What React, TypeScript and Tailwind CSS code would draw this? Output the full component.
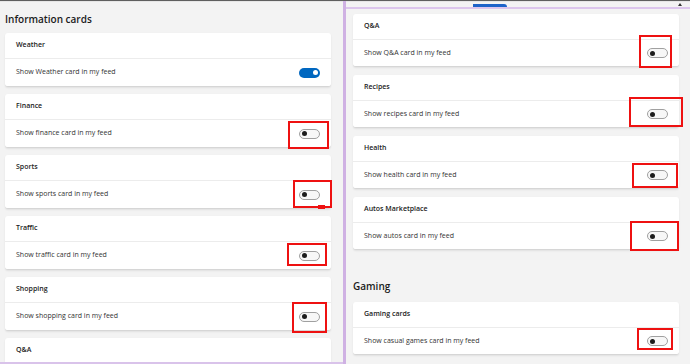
import React from 'react';

type Item = { title: string; label?: string; on?: boolean };

const leftCards: Item[] = [
  { title: 'Weather', label: 'Show Weather card in my feed', on: true },
  { title: 'Finance', label: 'Show finance card in my feed' },
  { title: 'Sports', label: 'Show sports card in my feed' },
  { title: 'Traffic', label: 'Show traffic card in my feed' },
  { title: 'Shopping', label: 'Show shopping card in my feed' },
  { title: 'Q&A' },
];

const rightCards: Item[] = [
  { title: 'Q&A', label: 'Show Q&A card in my feed' },
  { title: 'Recipes', label: 'Show recipes card in my feed' },
  { title: 'Health', label: 'Show health card in my feed' },
  { title: 'Autos Marketplace', label: 'Show autos card in my feed' },
];

// red annotation boxes drawn over the screenshot
const marks = [
  { x: 288, y: 121, w: 41, h: 28 },
  { x: 293, y: 180, w: 39, h: 28 },
  { x: 287, y: 243, w: 40, h: 23 },
  { x: 292, y: 302, w: 35, h: 31 },
  { x: 639, y: 35, w: 33, h: 33 },
  { x: 629, y: 97, w: 54, h: 30 },
  { x: 632, y: 163, w: 46, h: 25 },
  { x: 630, y: 221, w: 49, h: 30 },
  { x: 637, y: 328, w: 36, h: 22 },
];

const Toggle = ({ on }: { on?: boolean }) =>
  on ? (
    <div className="w-[21px] h-[10px] rounded-full bg-[#0067c0] flex items-center justify-end pr-[2px]">
      <div className="w-[5px] h-[5px] rounded-full bg-white" />
    </div>
  ) : (
    <div className="w-[21px] h-[10px] rounded-full border border-[#a0a0a0] bg-[#f7f7f7] flex items-center pl-[2px]">
      <div className="w-[5px] h-[5px] rounded-full bg-[#1c1c1c]" />
    </div>
  );

const Card = ({ item, tall }: { item: Item; tall?: boolean }) => (
  <div className="shrink-0 bg-white rounded-[3px] border-b border-[#d6d6d6] shadow-[0_1px_2px_rgba(0,0,0,0.08)]">
    <div className="h-[26px] px-[11px] flex items-center border-b border-[#ececec] text-[7px] font-semibold text-[#1b1b1b]">
      {item.title}
    </div>
    {item.label && (
      <div
        className={`${tall ? 'h-[27px]' : 'h-[26px]'} px-[11px] flex items-center justify-between text-[7px] text-[#333]`}
      >
        <span>{item.label}</span>
        <Toggle on={item.on} />
      </div>
    )}
  </div>
);

export default function App() {
  return (
    <div className="relative w-[690px] h-[364px] overflow-hidden bg-[#f3f3f3] font-['Open_Sans',sans-serif] flex flex-col">
      <div className="h-px bg-[#5f5f5f] shrink-0" />
      <div className="flex flex-1 min-h-0">
        {/* left window */}
        <div className="w-[343px] flex flex-col shrink-0">
          <div className="flex-1 min-h-0 overflow-hidden pl-[5px] pr-[12px] border-t border-[#e6e6e6]">
            <div className="h-[31px] flex items-center pt-[4px] text-[10px] font-semibold text-[#1b1b1b]">
              Information cards
            </div>
            <div className="flex flex-col gap-[7px]">
              {leftCards.map((c) => (
                <Card key={c.title} item={c} tall />
              ))}
            </div>
          </div>
          <div className="h-[2px] bg-[#d9c3ea] shrink-0" />
        </div>

        {/* divider */}
        <div className="w-[3px] bg-[#cfb1e3] shrink-0" />

        {/* right window */}
        <div className="flex-1 flex flex-col">
          <div className="h-[6px] flex items-end border-t border-[#e6e6e6] shrink-0">
            <div className="ml-[127px] w-[34px] h-[3px] bg-[#1d63c9] rounded-tr-[4px]" />
            <div className="ml-auto mr-[8px] self-start mt-[1px] w-0 h-0 border-l-[2px] border-r-[2px] border-b-[3px] border-l-transparent border-r-transparent border-b-[#333]" />
          </div>
          <div className="h-[2px] bg-[#dcc6ec] shrink-0" />
          <div className="flex-1 pl-[7px] pr-[11px] pt-[5px] flex flex-col">
            <div className="flex flex-col gap-[8px]">
              {rightCards.map((c) => (
                <Card key={c.title} item={c} />
              ))}
            </div>
            <div className="h-[52px] flex items-center pt-[21px] text-[10px] font-semibold text-[#1b1b1b]">
              Gaming
            </div>
            <Card item={{ title: 'Gaming cards', label: 'Show casual games card in my feed' }} />
          </div>
        </div>
      </div>

      {marks.map((m, i) => (
        <div
          key={i}
          className="absolute border-2 border-[#ee1111]"
          style={{ left: m.x, top: m.y, width: m.w, height: m.h }}
        />
      ))}
      <div className="absolute left-[318px] top-[205px] w-[7px] h-[4px] bg-[#ee1111]" />
    </div>
  );
}
